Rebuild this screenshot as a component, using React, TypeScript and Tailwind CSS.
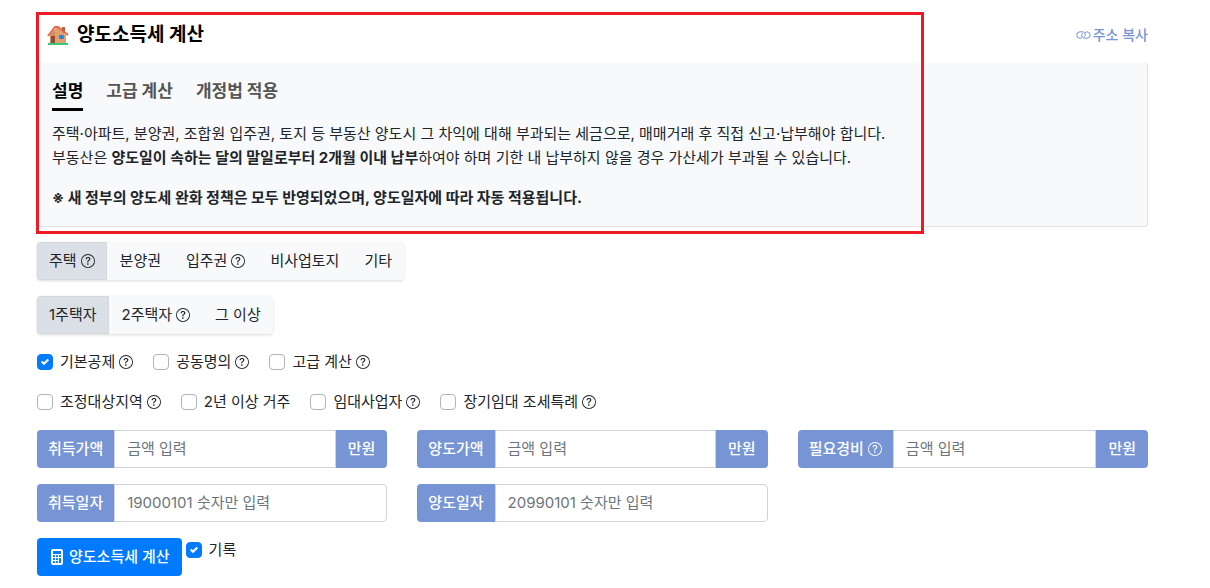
import type { ReactNode } from 'react'
import { BsCalculatorFill, BsQuestionCircle } from 'react-icons/bs'

const Help = () => <BsQuestionCircle size={14} className="shrink-0" aria-hidden="true" />

const HouseIcon = () => (
  <svg width="22" height="22" viewBox="0 0 22 22" aria-hidden="true">
    <path d="M1 19h20v2H1z" fill="#3fc47b" />
    <path d="M15 3h3v6h-3z" fill="#b9603f" />
    <path d="M3 11l4-5 4 5v8H3z" fill="#d18d60" />
    <path d="M7 6l3-3 9 8v8H8V9z" fill="#e2a06f" />
    <path d="M4 12h4v7H4z" fill="#8a5138" />
    <path d="M1 12L8 3h3l10 8" fill="none" stroke="#e0674b" strokeWidth="2" strokeLinejoin="round" />
    <path d="M12 11h5v4h-5z" fill="#2f8fe6" />
    <path d="M14 11h1v4h-1z" fill="#1f6fc4" />
  </svg>
)

const LinkIcon = () => (
  <svg width="15" height="8" viewBox="0 0 15 8" fill="none" stroke="currentColor" strokeLinecap="round" aria-hidden="true">
    <path d="M5.5 6.5C5 7 4.500 7.200 4 7.200A3.200 3.200 0 0 1 4 .8h2.500a2.800 2.800 0 0 1 2 4.800" />
    <path d="M9.500 1.500C10 1 10.500.8 11 .8a3.200 3.200 0 0 1 0 6.400H8.500a2.800 2.800 0 0 1-2-4.800" />
  </svg>
)

interface TabGroupProps {
  name: string
  items: { label: string; help?: boolean }[]
}

const TabGroup = ({ name, items }: TabGroupProps) => (
  <div role="group" aria-label={name} className="flex w-fit gap-px overflow-hidden rounded bg-[#f8f9fb] shadow-[0_1px_3px_rgba(0,0,0,0.15)]">
    {items.map((item, i) => (
      <button
        key={item.label}
        type="button"
        aria-pressed={i === 0}
        className={`flex h-[38px] items-center gap-1 border px-[11px] ${
          i === 0 ? 'border-[#d3d9df] bg-[#dae0e5]' : 'border-[#f8f9fb] bg-[#f8f9fb]'
        }`}
      >
        {item.label}
        {item.help && <Help />}
      </button>
    ))}
  </div>
)

interface CheckProps {
  label: string
  help?: boolean
  checked?: boolean
}

const Check = ({ label, help, checked }: CheckProps) => (
  <label className="flex h-6 items-center gap-[7px]">
    <span className="grid">
      <input
        type="checkbox"
        defaultChecked={checked}
        className="peer col-start-1 row-start-1 size-4 appearance-none rounded border border-[#adb5bd] bg-white checked:border-[#007bff] checked:bg-[#007bff]"
      />
      <svg viewBox="0 0 8 8" className="pointer-events-none col-start-1 row-start-1 hidden size-2 place-self-center peer-checked:block" aria-hidden="true">
        <path fill="#fff" d="M6.564.75l-3.59 3.612-1.538-1.55L0 4.26l2.974 2.99L8 2.193z" />
      </svg>
    </span>
    <span className="flex items-center gap-1">
      {label}
      {help && <Help />}
    </span>
  </label>
)

interface FieldProps {
  id: string
  label: ReactNode
  placeholder: string
  unit?: string
}

const Field = ({ id, label, placeholder, unit }: FieldProps) => (
  <div className="flex h-[38px] overflow-hidden rounded">
    <label htmlFor={id} className="flex shrink-0 items-center gap-1 bg-[#7795d4] px-[11px] font-medium text-white">
      {label}
    </label>
    <input
      id={id}
      type="text"
      placeholder={placeholder}
      className={`min-w-0 flex-1 border border-[#ced4da] bg-white px-3 placeholder:text-[#6c757d] ${unit ? '' : 'rounded-r'}`}
    />
    {unit && <span className="flex shrink-0 items-center bg-[#7795d4] px-3 font-medium text-white">{unit}</span>}
  </div>
)

export default function App() {
  return (
    <main className="relative bg-white pt-5 pr-[62px] pl-[37px] font-[Inter,'Noto_Sans_CJK_KR',sans-serif] text-[15px] leading-6 text-[#212529]">
      <header className="flex h-[30px] items-center justify-between pl-[10px]">
        <h1 className="flex items-center gap-2 text-[19px] font-bold text-black">
          <HouseIcon />
          양도소득세 계산
        </h1>
        <a href="#copy" className="flex items-center gap-0.5 text-sm font-medium text-[#7795d4]">
          <LinkIcon />
          주소 복사
        </a>
      </header>

      <section className="mt-[13px] h-[164px] rounded border-r border-b border-[#dee2e6] bg-[#f8f9fb] px-[15px] pt-3">
        <nav className="flex gap-[23px] text-[17px] font-bold text-[#555]">
          <button type="button" className="h-9 border-b-3 border-black pb-0.5 text-black">설명</button>
          <button type="button" className="h-9 border-b-3 border-transparent pb-0.5">고급 계산</button>
          <button type="button" className="h-9 border-b-3 border-transparent pb-0.5">개정법 적용</button>
        </nav>
        <p className="mt-[11px]">
          주택·아파트, 분양권, 조합원 입주권, 토지 등 부동산 양도시 그 차익에 대해 부과되는 세금으로, 매매거래 후 직접 신고·납부해야 합니다.
          <br />
          부동산은 <b>양도일이 속하는 달의 말일로부터 2개월 이내 납부</b>하여야 하며 기한 내 납부하지 않을 경우 가산세가 부과될 수 있습니다.
        </p>
        <p className="mt-4 font-bold">※ 새 정부의 양도세 완화 정책은 모두 반영되었으며, 양도일자에 따라 자동 적용됩니다.</p>
      </section>

      <form onSubmit={(e) => e.preventDefault()}>
        <div className="mt-[15px] flex flex-col gap-4">
          <TabGroup
            name="부동산 종류"
            items={[{ label: '주택', help: true }, { label: '분양권' }, { label: '입주권', help: true }, { label: '비사업토지' }, { label: '기타' }]}
          />
          <TabGroup name="주택 수" items={[{ label: '1주택자' }, { label: '2주택자', help: true }, { label: '그 이상' }]} />
          <div className="flex gap-5">
            <Check label="기본공제" help checked />
            <Check label="공동명의" help />
            <Check label="고급 계산" help />
          </div>
          <div className="flex gap-5">
            <Check label="조정대상지역" help />
            <Check label="2년 이상 거주" />
            <Check label="임대사업자" help />
            <Check label="장기임대 조세특례" help />
          </div>
          <div className="grid grid-cols-3 gap-x-[30px] gap-y-4">
            <Field id="buy-price" label="취득가액" placeholder="금액 입력" unit="만원" />
            <Field id="sell-price" label="양도가액" placeholder="금액 입력" unit="만원" />
            <Field id="cost" label={<>필요경비 <Help /></>} placeholder="금액 입력" unit="만원" />
            <Field id="buy-date" label="취득일자" placeholder="19000101 숫자만 입력" />
            <Field id="sell-date" label="양도일자" placeholder="20990101 숫자만 입력" />
          </div>
          <div className="flex items-start gap-1">
            <button type="submit" className="flex h-[38px] items-center gap-1 rounded bg-[#007bff] px-3 font-medium text-white">
              <BsCalculatorFill size={16} aria-hidden="true" />
              양도소득세 계산
            </button>
            <Check label="기록" checked />
          </div>
        </div>
      </form>

      {/* highlight frame around the description */}
      <div className="pointer-events-none absolute top-3 left-9 h-[222px] w-[888px] border-3 border-[#ed1c24]" aria-hidden="true" />
    </main>
  )
}
